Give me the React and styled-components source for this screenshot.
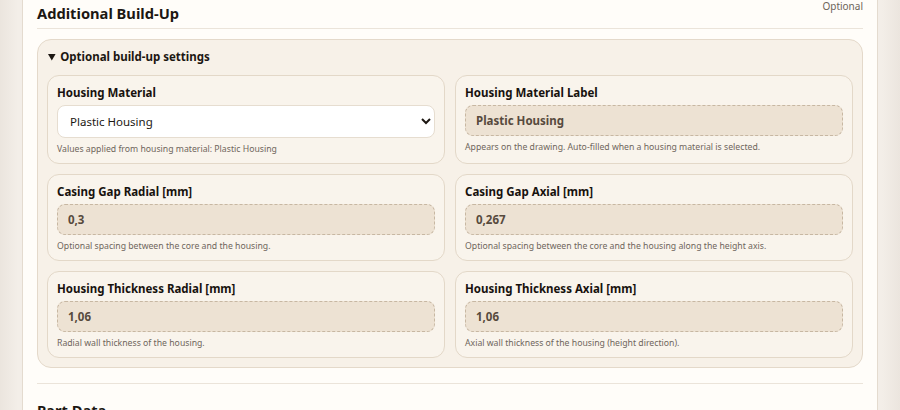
import React from "react"
import styled, { createGlobalStyle } from "styled-components"

const fields = [
  {
    label: "Housing Material",
    kind: "select",
    value: "Plastic Housing",
    options: ["Plastic Housing", "Aluminium Housing", "Steel Housing", "No Housing"],
    hint: "Values applied from housing material: Plastic Housing",
  },
  {
    label: "Housing Material Label",
    value: "Plastic Housing",
    hint: "Appears on the drawing. Auto-filled when a housing material is selected.",
  },
  {
    label: "Casing Gap Radial [mm]",
    value: "0,3",
    hint: "Optional spacing between the core and the housing.",
  },
  {
    label: "Casing Gap Axial [mm]",
    value: "0,267",
    hint: "Optional spacing between the core and the housing along the height axis.",
  },
  {
    label: "Housing Thickness Radial [mm]",
    value: "1,06",
    hint: "Radial wall thickness of the housing.",
  },
  {
    label: "Housing Thickness Axial [mm]",
    value: "1,06",
    hint: "Axial wall thickness of the housing (height direction).",
  },
]

const App = () => {
  return (
    <>
      <GlobalStyle />
      <Page>
        <Sheet>
          <SectionHead>
            <Title>Additional Build-Up</Title>
            <Badge>Optional</Badge>
          </SectionHead>
          <Rule $top={0} $bottom={10} />
          <Details open>
            <Summary>Optional build-up settings</Summary>
            <Grid>
              {fields.map((f) => (
                <Field key={f.label}>
                  <Label>{f.label}</Label>
                  {f.kind === "select" ? (
                    <Select defaultValue={f.value}>
                      {f.options.map((o) => (
                        <option key={o}>{o}</option>
                      ))}
                    </Select>
                  ) : (
                    <ReadOnly readOnly value={f.value} />
                  )}
                  <Hint>{f.hint}</Hint>
                </Field>
              ))}
            </Grid>
          </Details>
          <Rule $top={15} $bottom={13} />
          <Title as="h2">Part Data</Title>
        </Sheet>
      </Page>
    </>
  )
}

const GlobalStyle = createGlobalStyle`
  html, body {
    margin: 0;
    background: #eee8e1;
    font-family: "Noto Sans", "Open Sans", sans-serif;
    color: #1c1712;
  }
`

const Page = styled.div`
  padding: 0 22px;
  height: 410px;
  overflow: hidden;
  background: linear-gradient(90deg, #ebe5de 0%, #f3eee8 2%, #f3eee8 98%, #ebe5de 100%);
`

const Sheet = styled.div`
  background: #fffdf9;
  border-left: 1px solid #e4dbcf;
  border-right: 1px solid #e4dbcf;
  padding: 0 14px 20px;
  min-height: 410px;
  box-sizing: border-box;
`

const SectionHead = styled.div`
  display: flex;
  justify-content: space-between;
  align-items: flex-start;
  height: 28px;
`

const Title = styled.h3`
  margin: 0;
  padding-top: 3px;
  font-size: 14.7px;
  font-weight: 700;
  line-height: 21px;
  color: #1c1712;
`

const Badge = styled.span`
  font-size: 10px;
  line-height: 12px;
  color: #6d645a;
`

const Rule = styled.hr`
  border: 0;
  border-top: 1px solid #ebe4da;
  margin: ${(p) => p.$top}px 0 ${(p) => p.$bottom}px;
`

const Details = styled.details`
  background: #f7f1e8;
  border: 1px solid #e4d9ca;
  border-radius: 14px;
  padding: 9px 9px 9px;
`

const Summary = styled.summary`
  font-size: 11.5px;
  font-weight: 700;
  line-height: 16px;
  cursor: pointer;
  margin-bottom: 10px;
  padding-left: 1px;
`

const Grid = styled.div`
  display: grid;
  grid-template-columns: 1fr 1fr;
  gap: 10px;
`

const Field = styled.div`
  display: flex;
  flex-direction: column;
  border: 1px solid #e3d8c8;
  border-radius: 12px;
  background: #f9f4ec;
  padding: 9px 9px 7px;
`

const Label = styled.label`
  font-size: 11.5px;
  font-weight: 700;
  line-height: 16px;
  margin-bottom: 4px;
  color: #17120e;
`

const Select = styled.select`
  height: 33px;
  border: 1px solid #e6ddd0;
  border-radius: 8px;
  background: #ffffff;
  font-family: inherit;
  font-size: 11.5px;
  color: #1c1712;
  padding: 0 8px;
`

const ReadOnly = styled.input`
  height: 31px;
  box-sizing: border-box;
  border: 1px dashed #c7b7a2;
  border-radius: 8px;
  background: #ede2d3;
  font-family: inherit;
  font-size: 11.5px;
  font-weight: 700;
  color: #574a3d;
  padding: 0 10px;
  outline: none;
`

const Hint = styled.small`
  font-size: 8.7px;
  line-height: 14px;
  margin-top: 4px;
  color: #6f665c;
`

export default App
